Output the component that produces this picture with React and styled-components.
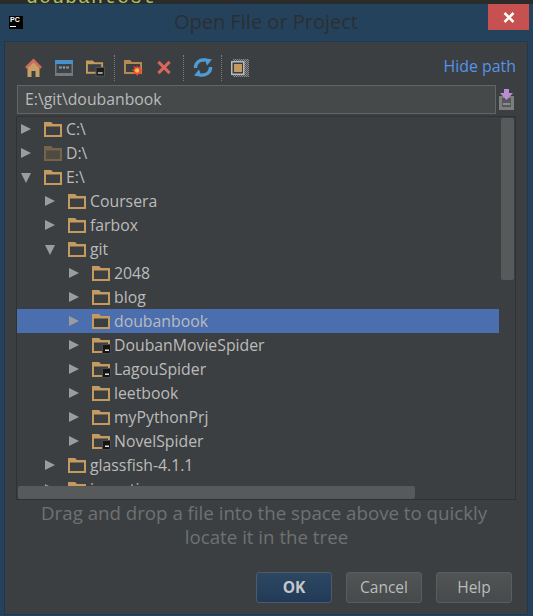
import styled, { createGlobalStyle } from 'styled-components'

const GlobalStyle = createGlobalStyle`
    html, body{
        margin: 0;
        padding: 0;
        background: #25425c;
    }
    body{
        font-family: "Open Sans", "Noto Sans", "Liberation Sans", sans-serif;
    }
`

const tree = [
    { level: 0, name: 'C:\\' },
    { level: 0, name: 'D:\\', dim: true },
    { level: 0, name: 'E:\\', open: true },
    { level: 1, name: 'Coursera' },
    { level: 1, name: 'farbox' },
    { level: 1, name: 'git', open: true },
    { level: 2, name: '2048' },
    { level: 2, name: 'blog' },
    { level: 2, name: 'doubanbook', selected: true },
    { level: 2, name: 'DoubanMovieSpider', project: true },
    { level: 2, name: 'LagouSpider', project: true },
    { level: 2, name: 'leetbook' },
    { level: 2, name: 'myPythonPrj' },
    { level: 2, name: 'NovelSpider', project: true },
    { level: 1, name: 'glassfish-4.1.1' },
    { level: 1, name: 'inception' },
]

function Folder({ dim, project }) {
    const color = dim ? '#75644c' : '#c49a5f'
    return (
        <svg width="20" height="17" viewBox="0 0 20 17">
            <path d="M1 1h7l2 2h9v13H1z" fill={color} />
            <rect x="3" y="5.5" width="14" height="8.5" fill={dim ? '#4f4a42' : '#3c3f41'} />
            {project && <rect x="11.500" y="7.500" width="8" height="9" fill="#141414" stroke="#4a4a4a" />}
            {project && <rect x="14" y="12.500" width="4" height="1.500" fill="#e0e0e0" />}
        </svg>
    )
}

function Arrow({ open }) {
    return (
        <svg width="12" height="12" viewBox="0 0 12 12">
            <path d={open ? 'M1 2h10l-5 10z' : 'M1 1l10 5-10 5z'} fill="#9a9c9e" />
        </svg>
    )
}

function App() {
    return (
        <>
            <GlobalStyle />
            <Strip><StripText>doubantest</StripText></Strip>
            <Win>
                <TitleBar>
                    <Logo>PC<i /></Logo>
                    <Title>Open File or Project</Title>
                    <Close>
                        <svg width="12" height="11" viewBox="0 0 12 11">
                            <path d="M1.500 1l9 9M10.500 1l-9 9" stroke="#fff" strokeWidth="2.600" />
                        </svg>
                    </Close>
                </TitleBar>
                <Panel>
                    <Toolbar>
                        <Icons>
                            <Tool $w={17} $mr={13}>
                                <svg width="17" height="19" viewBox="0 0 17 19">
                                    <path d="M2.500 9.500L8.500 3.500l6 6V19h-4v-6h-4v6h-4z" fill="#c99f68" />
                                    <path d="M1 10l7.500-7.500L16 10" fill="none" stroke="#cf6b5c" strokeWidth="2.800" />
                                </svg>
                            </Tool>
                            <Tool $w={18} $mr={13}>
                                <svg width="18" height="16" viewBox="0 0 18 16">
                                    <rect width="18" height="16" fill="#77797b" />
                                    <rect width="18" height="4" fill="#4b8fc7" />
                                    <rect x="1.500" y="4" width="15" height="9" fill="#3a424a" />
                                    <rect x="4" y="6.500" width="3" height="2" fill="#6f9cc2" />
                                    <rect x="8" y="6.500" width="2" height="2" fill="#c79f6a" />
                                    <rect x="11" y="6.500" width="3" height="2" fill="#8a9096" />
                                </svg>
                            </Tool>
                            <Tool $w={19} $mr={9}><ToolbarFolder /></Tool>
                            <Sep />
                            <Tool $w={19} $mr={14}>
                                <svg width="19" height="17" viewBox="0 0 19 17">
                                    <path d="M0 1h6l2 2h10v12H0z" fill="#b58a50" />
                                    <rect x="2" y="5" width="14" height="8" fill="#3c3f41" />
                                    <path d="M13 6l1.200 2.500 3-1.500-1 3 3 1-2.500 1.500 1.500 3-3-1L13 17l-1.200-2.500-3 1 1.200-3-2.500-1.500 3-1-1-3 3 1.500z" fill="#ee4a30" />
                                    <circle cx="13" cy="11.500" r="2.200" fill="#f7b65e" />
                                </svg>
                            </Tool>
                            <Tool $w={14} $mr={12}>
                                <svg width="15" height="15" viewBox="0 0 15 15">
                                    <path d="M1.500 1.500l12 12M13.500 1.500l-12 12" stroke="#d9665a" strokeWidth="3.200" />
                                </svg>
                            </Tool>
                            <Sep />
                            <Tool $w={20} $mr={8}>
                                <svg width="20" height="19" viewBox="0 0 20 19">
                                    <path d="M2.500 10A7.500 7.500 0 0 1 12 2.300" fill="none" stroke="#4f9bd6" strokeWidth="3.400" />
                                    <path d="M17.500 9A7.500 7.500 0 0 1 8 16.700" fill="none" stroke="#4f9bd6" strokeWidth="3.400" />
                                    <path d="M11 0l8 1.500-5 6zM9 19l-8-1.500 5-6z" fill="#4f9bd6" />
                                </svg>
                            </Tool>
                            <Sep />
                            <Tool $w={18} $mr={0}>
                                <svg width="18" height="18" viewBox="0 0 18 18">
                                    <defs>
                                        <pattern id="checker" width="2" height="2" patternUnits="userSpaceOnUse">
                                            <rect width="2" height="2" fill="#4a4c4e" />
                                            <rect width="1" height="1" fill="#8a8a8a" />
                                            <rect x="1" y="1" width="1" height="1" fill="#8a8a8a" />
                                        </pattern>
                                    </defs>
                                    <rect x="2" y="0" width="16" height="18" fill="url(#checker)" />
                                    <rect x="0.750" y="2.750" width="12" height="12.500" fill="#3c3f41" stroke="#b8b8b8" strokeWidth="1.500" />
                                    <rect x="3" y="5" width="8" height="8" fill="#c49a5f" />
                                </svg>
                            </Tool>
                        </Icons>
                        <HidePath>Hide path</HidePath>
                    </Toolbar>
                    <PathRow>
                        <PathInput>E:\git\doubanbook</PathInput>
                        <svg width="15" height="21" viewBox="0 0 15 21">
                            <path d="M0 7h15v14H0z" fill="#7d7d7d" />
                            <rect x="3" y="9" width="9" height="9" fill="#55585a" />
                            <rect x="4" y="14" width="7" height="2" fill="#8b8b8b" />
                            <path d="M5 0h5v4h4l-6.500 7L1 4h4z" fill="#b78fd0" />
                        </svg>
                    </PathRow>
                    <Tree>
                        {tree.map((item) => (
                            <Row key={item.name} $selected={item.selected} $level={item.level}>
                                <ArrowBox><Arrow open={item.open} /></ArrowBox>
                                <Folder dim={item.dim} project={item.project} />
                                <Name>{item.name}</Name>
                            </Row>
                        ))}
                        <VScroll />
                        <HScroll />
                    </Tree>
                    <Hint>Drag and drop a file into the space above to quickly{'\u00a0'}<br />locate it in the tree</Hint>
                    <Buttons>
                        <Btn $primary>OK</Btn>
                        <Btn>Cancel</Btn>
                        <Btn>Help</Btn>
                    </Buttons>
                </Panel>
            </Win>
        </>
    )
}

function ToolbarFolder() {
    return (
        <svg width="20" height="18" viewBox="0 0 20 18">
            <path d="M0 1h7l2 2h9v12H0z" fill="#c49a5f" />
            <rect x="2" y="5" width="14" height="8" fill="#3c3f41" />
            <rect x="10.500" y="8.500" width="9" height="9" fill="#1c1c1c" stroke="#555" />
            <rect x="12.500" y="13.500" width="5" height="1.500" fill="#ccc" />
        </svg>
    )
}

export default App

const Strip = styled.div`
    height: 4px;
    overflow: hidden;
    background: #2b2b2b;
    padding-left: 26px;
`
const StripText = styled.div`
    font-size: 20px;
    line-height: 20px;
    margin-top: -12px;
    color: #a5c25c;
    font-family: "Liberation Mono", monospace;
    letter-spacing: 1px;
`
const Win = styled.div`
    width: 533px;
    height: 612px;
    box-sizing: border-box;
    background: #25425c;
    padding: 0 5px 1px 4px;
    display: flex;
    flex-direction: column;
`
const TitleBar = styled.div`
    height: 37px;
    flex: none;
    display: flex;
    align-items: flex-start;
    position: relative;
`
const Logo = styled.div`
    width: 14px;
    height: 13px;
    margin: 12px 0 0 5px;
    background: #000;
    color: #fff;
    font: bold 7px/8px "Liberation Sans", sans-serif;
    padding-left: 1px;
    box-sizing: border-box;
    position: relative;

    i{
        position: absolute;
        left: 1px;
        bottom: 2px;
        width: 6px;
        height: 1px;
        background: #fff;
    }
`
const Title = styled.div`
    flex: 1;
    text-align: center;
    font-size: 20px;
    line-height: 24px;
    margin: 6px 19px 0 0;
    color: #2b2f33;
`
const Close = styled.div`
    position: absolute;
    top: 0;
    right: -1px;
    width: 41px;
    height: 26px;
    background: #c75050;
    display: flex;
    align-items: center;
    justify-content: center;
`
const Panel = styled.div`
    flex: 1;
    background: #3c3f41;
    border: 1px solid #20384e;
    display: flex;
    flex-direction: column;
    padding: 0 0 0 12px;
`
const Toolbar = styled.div`
    height: 43px;
    flex: none;
    display: flex;
    align-items: center;
    justify-content: space-between;
    padding: 8px 0 0 8px;
    box-sizing: border-box;
    width: 499px;
`
const Icons = styled.div`
    display: flex;
    align-items: center;
`
const Tool = styled.div`
    width: ${(p) => p.$w}px;
    margin-right: ${(p) => p.$mr}px;
    display: flex;
    justify-content: center;
`
const Sep = styled.div`
    height: 26px;
    border-left: 1px dotted #7a7c7e;
    margin-right: 9px;
`
const HidePath = styled.div`
    color: #5394ec;
    font-size: 15.900px;
    line-height: 20px;
    margin-top: -3px;
`
const PathRow = styled.div`
    display: flex;
    align-items: center;
    gap: 3px;
    height: 29px;
    flex: none;
`
const PathInput = styled.div`
    width: 479px;
    height: 29px;
    box-sizing: border-box;
    background: #45494a;
    border: 1px solid #646464;
    color: #bbbbbb;
    font-size: 15.800px;
    line-height: 27px;
    padding-left: 7px;
`
const Tree = styled.div`
    position: relative;
    width: 500px;
    height: 384px;
    box-sizing: border-box;
    margin: 2px 0 0 -1px;
    border: 1px solid #2f3133;
    overflow: hidden;
    flex: none;
`
const Row = styled.div`
    height: 24px;
    display: flex;
    align-items: center;
    flex: none;
    width: 482px;
    padding-left: ${(p) => 3 + p.$level * 24}px;
    box-sizing: border-box;
    background: ${(p) => (p.$selected ? '#4b6eaf' : 'transparent')};
`
const ArrowBox = styled.div`
    width: 23px;
    display: flex;
`
const Name = styled.div`
    margin-left: 3px;
    color: #bbbbbb;
    font-size: 15.800px;
    line-height: 24px;
`
const VScroll = styled.div`
    position: absolute;
    right: 1px;
    top: 1px;
    width: 13px;
    height: 162px;
    background: #58595b;
    border-radius: 2px;
`
const HScroll = styled.div`
    position: absolute;
    left: 1px;
    bottom: 0;
    width: 397px;
    height: 13px;
    background: #58595b;
    border-radius: 2px;
`
const Hint = styled.div`
    width: 499px;
    text-align: center;
    color: #6f7173;
    font-size: 18.700px;
    line-height: 24px;
    margin-top: 1px;
`
const Buttons = styled.div`
    display: flex;
    justify-content: flex-end;
    gap: 14px;
    margin-top: 23px;
    width: 495px;
`
const Btn = styled.div`
    width: 76px;
    height: 31px;
    box-sizing: border-box;
    border: 1px solid ${(p) => (p.$primary ? '#4c5a6a' : '#5a5d5f')};
    border-radius: 3px;
    background: ${(p) => (p.$primary ? 'linear-gradient(#2d4763, #223a57)' : 'linear-gradient(#505455, #464a4b)')};
    color: ${(p) => (p.$primary ? '#c4c8cc' : '#bbbbbb')};
    font-size: 15.500px;
    font-weight: ${(p) => (p.$primary ? 700 : 400)};
    line-height: 29px;
    text-align: center;
`
